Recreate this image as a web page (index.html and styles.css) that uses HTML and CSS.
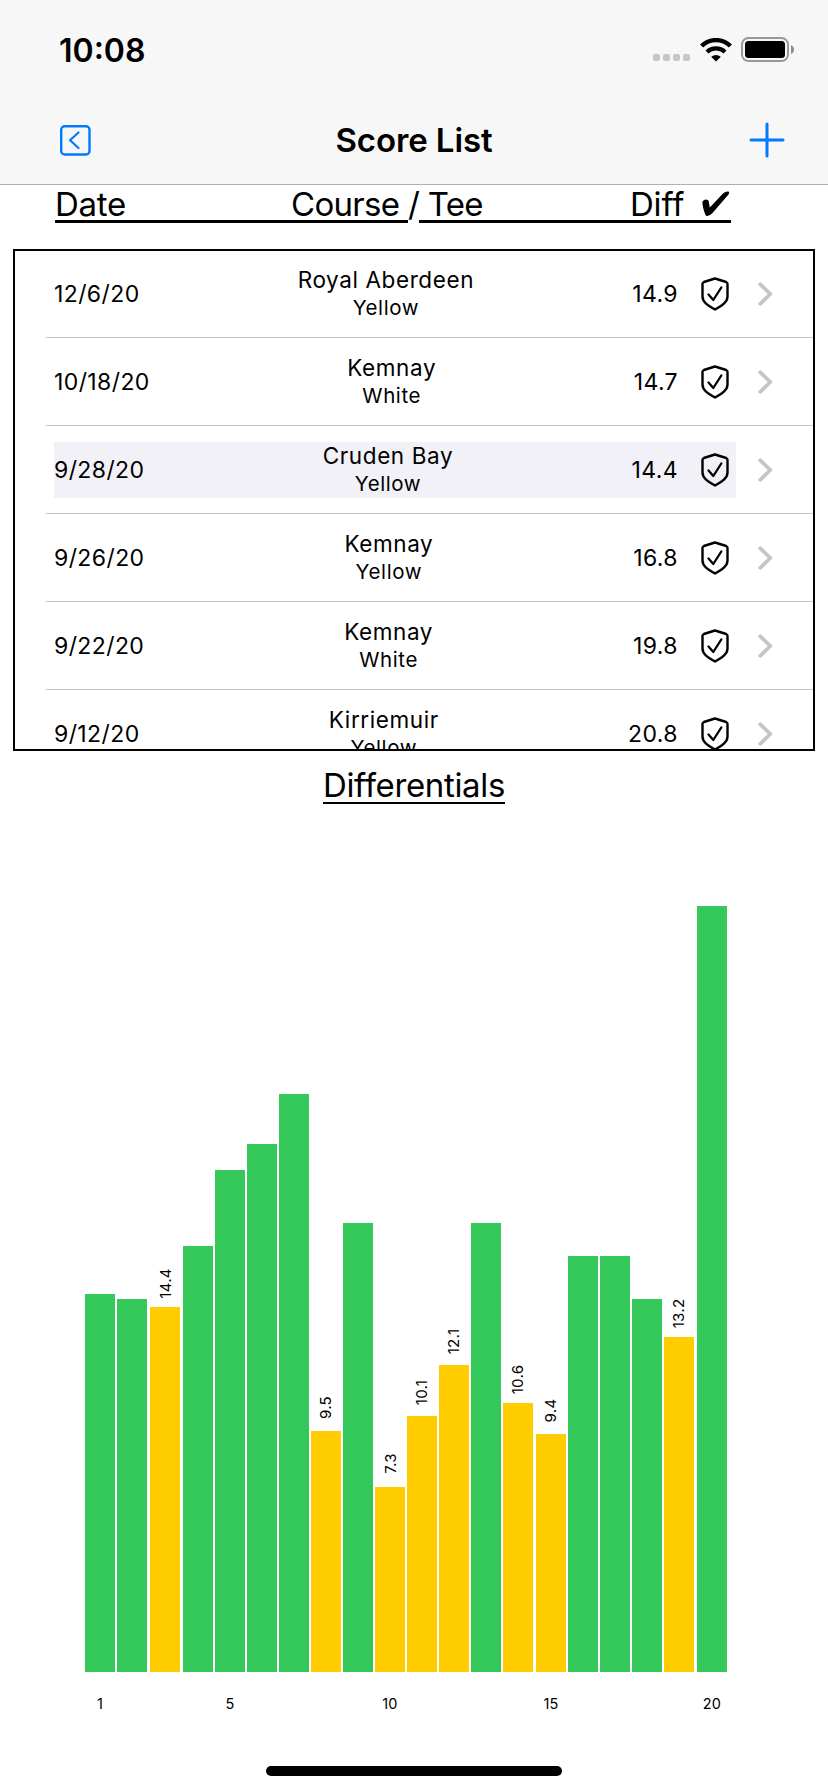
FILE: index.html
```html
<!DOCTYPE html>
<html lang="en">
<head>
    <meta charset="UTF-8">
    <meta name="viewport" content="width=device-width, initial-scale=1.0">
    <title>Score List</title>
    <link rel="stylesheet" href="styles.css">
</head>
<body>
    <svg class="defs" width="0" height="0">
        <symbol id="shield" viewBox="0 0 28 34">
            <path d="M14 1.5 L25.2 5 Q26.5 5.5 26.5 7 V19.5 C26.5 26 19 29.5 14 32.5 C9 29.5 1.5 26 1.5 19.5 V7 Q1.5 5.5 2.8 5 Z" fill="none" stroke="#000" stroke-width="2.4" stroke-linejoin="round"/>
            <path d="M7.5 17.5 L12.3 23 L20.3 10.5" fill="none" stroke="#000" stroke-width="2.3" stroke-linecap="round" stroke-linejoin="round"/>
        </symbol>
        <symbol id="chevron" viewBox="0 0 15 24">
            <path d="M2.2 2.2 L12.4 12 L2.2 21.8" fill="none" stroke="#c5c5c7" stroke-width="3.8" stroke-linecap="round" stroke-linejoin="round"/>
        </symbol>
    </svg>

    <header class="top">
        <div class="status">
            <div class="time">10:08</div>
            <div class="status-icons">
                <div class="dots"><i></i><i></i><i></i><i></i></div>
                <svg class="wifi" width="32" height="24" viewBox="0 0 32 24">
                    <path d="M1.6 8 A20.5 20.5 0 0 1 30.4 8" fill="none" stroke="#000" stroke-width="4.4"/>
                    <path d="M7 14 A13 13 0 0 1 25 14" fill="none" stroke="#000" stroke-width="4.2"/>
                    <path d="M16 23.6 L11.2 18.8 Q16 15 20.8 18.8 Z"/>
                </svg>
                <svg class="battery" width="53" height="25" viewBox="0 0 53 25">
                    <rect x="1" y="1" width="46" height="23" rx="6.5" fill="none" stroke="#999" stroke-width="2"/>
                    <rect x="4" y="4" width="40" height="17" rx="3.5"/>
                    <path d="M50 8 Q53 9.5 53 12.5 Q53 15.5 50 17 Z" fill="#8e8e8e"/>
                </svg>
            </div>
        </div>
        <div class="nav">
            <svg width="31" height="31" viewBox="0 0 31 31">
                <rect x="1.2" y="1.2" width="28.3" height="28.3" rx="3.5" fill="none" stroke="#007aff" stroke-width="2.4"/>
                <path d="M18.5 7.5 L10 15.2 L18.5 23" fill="none" stroke="#007aff" stroke-width="2.2" stroke-linecap="round" stroke-linejoin="round"/>
            </svg>
            <h1>Score List</h1>
            <svg width="36" height="36" viewBox="0 0 36 36">
                <path d="M18 2 V34 M2 18 H34" fill="none" stroke="#007aff" stroke-width="3" stroke-linecap="round"/>
            </svg>
        </div>
    </header>

    <div class="columns">
        <span class="col-date">Date</span>
        <span class="col-course">Course <span class="slash">/</span> Tee</span>
        <span class="col-diff">Diff</span>
        <svg class="tick" width="28" height="26" viewBox="0 0 28 26">
            <path d="M26.5 0.5 Q28 1.5 26.5 3.5 L10.5 22 Q7.5 25.5 4 24.8 C2.5 22 0 14 0.5 10.5 Q3 7 6.5 9.5 L7.8 16.5 L21 2.5 Q24 0 26.5 0.5 Z"/>
        </svg>
    </div>

    <div class="list">
        <div class="row">
            <div class="score">
                <span class="date">12/6/20</span>
                <div class="course"><div>Royal Aberdeen</div><small>Yellow</small></div>
                <span class="diff">14.9</span>
            </div>
            <svg class="chevron"><use href="#chevron"/></svg>
        </div>
        <div class="row">
            <div class="score">
                <span class="date">10/18/20</span>
                <div class="course"><div>Kemnay</div><small>White</small></div>
                <span class="diff">14.7</span>
            </div>
            <svg class="chevron"><use href="#chevron"/></svg>
        </div>
        <div class="row">
            <div class="score selected">
                <span class="date">9/28/20</span>
                <div class="course"><div>Cruden Bay</div><small>Yellow</small></div>
                <span class="diff">14.4</span>
            </div>
            <svg class="chevron"><use href="#chevron"/></svg>
        </div>
        <div class="row">
            <div class="score">
                <span class="date">9/26/20</span>
                <div class="course"><div>Kemnay</div><small>Yellow</small></div>
                <span class="diff">16.8</span>
            </div>
            <svg class="chevron"><use href="#chevron"/></svg>
        </div>
        <div class="row">
            <div class="score">
                <span class="date">9/22/20</span>
                <div class="course"><div>Kemnay</div><small>White</small></div>
                <span class="diff">19.8</span>
            </div>
            <svg class="chevron"><use href="#chevron"/></svg>
        </div>
        <div class="row">
            <div class="score">
                <span class="date">9/12/20</span>
                <div class="course"><div>Kirriemuir</div><small>Yellow</small></div>
                <span class="diff">20.8</span>
            </div>
            <svg class="chevron"><use href="#chevron"/></svg>
        </div>
    </div>

    <h2><span>Differentials</span></h2>
    <div class="chart" id="chart"></div>
    <div class="home"></div>

    <script>
        // every listed score is verified, so each one gets the shield
        document.querySelectorAll('.score').forEach(score => {
            score.insertAdjacentHTML('beforeend', '<svg class="shield"><use href="#shield"/></svg>');
        });

        // height in px, label (only the counting scores have one)
        const scores = [
            [378], [373], [365, "14.4"], [426], [502],
            [528], [578], [241, "9.5"], [449], [185, "7.3"],
            [256, "10.1"], [307, "12.1"], [449], [269, "10.6"], [238, "9.4"],
            [416], [416], [373], [335, "13.2"], [766]
        ];
        const chart = document.getElementById('chart');
        scores.forEach(([height, label], i) => {
            const n = i + 1;
            const col = document.createElement('div');
            col.classList.add('col');
            if (label) {
                const value = document.createElement('div');
                value.classList.add('value');
                value.innerHTML = '<span>' + label + '</span>';
                col.appendChild(value);
            }
            const bar = document.createElement('div');
            bar.className = label ? 'bar best' : 'bar';
            bar.style.height = height + 'px';
            col.appendChild(bar);
            const axis = document.createElement('div');
            axis.classList.add('axis');
            axis.innerText = n === 1 || n % 5 === 0 ? n : '';
            col.appendChild(axis);
            chart.appendChild(col);
        });
    </script>
</body>
</html>
```
FILE: styles.css
```css
* {
    box-sizing: border-box;
}
body {
    margin: 0;
    width: 828px;
    height: 1792px;
    overflow: hidden;
    background: #fff;
    color: #000;
    font-family: Inter, "Liberation Sans", sans-serif;
    display: flex;
    flex-direction: column;
}
svg {
    display: block;
    flex: none;
}
.defs {
    position: absolute;
}
.top {
    height: 185px;
    flex: none;
    background: #f7f7f7;
    border-bottom: 1px solid #b0b0b0;
}
.status {
    height: 96px;
    padding: 5px 34px 0 59px;
    display: flex;
    align-items: center;
    justify-content: space-between;
}
.time {
    font-size: 32px;
    font-weight: 600;
    line-height: 40px;
    letter-spacing: 0;
}
.status-icons {
    display: flex;
    align-items: center;
    margin-top: -2px;
}
.dots {
    display: flex;
    gap: 3px;
    margin: 16px 10px 0 0;
}
.dots i {
    width: 7px;
    height: 7px;
    border-radius: 2px;
    background: #c6c6c6;
}
.wifi {
    margin-right: 9px;
}
.nav {
    height: 88px;
    padding: 0 43px 0 60px;
    display: flex;
    align-items: center;
    justify-content: space-between;
}
h1 {
    margin: 0 0 0 -12px;
    font-size: 33px;
    font-weight: 600;
    line-height: 40px;
    letter-spacing: -0.1px;
}
.columns {
    height: 38px;
    flex: none;
    margin: 0 97px 0 55px;
    border-bottom: 3px solid #000;
    display: flex;
    font-size: 33px;
    line-height: 38px;
    letter-spacing: -0.7px;
}
.col-date {
    width: 236px;
    letter-spacing: -0.3px;
}
.col-course {
    width: 339px;
    white-space: nowrap;
}
.slash {
    position: relative;
    display: inline-block;
    height: 38px;
    background: #fff;
}
.col-diff {
    width: 72px;
    letter-spacing: -0.2px;
}
.tick {
    margin-top: 6px;
}
.list {
    width: 802px;
    height: 502px;
    flex: none;
    margin: 26px 0 0 13px;
    border: 2px solid #000;
    overflow: hidden;
}
.row {
    height: 88px;
    margin-left: 31px;
    padding: 0 40px 0 8px;
    border-bottom: 1px solid #c6c6c8;
    display: flex;
    align-items: center;
    justify-content: space-between;
}
.row:first-child {
    margin-top: -1px;
}
.score {
    width: 682px;
    height: 56px;
    padding-right: 7px;
    display: flex;
    align-items: center;
    justify-content: space-between;
}
.selected {
    background: #f2f1f7;
}
.date, .diff {
    padding-top: 1px;
    font-size: 23px;
    line-height: 30px;
    letter-spacing: 0.4px;
}
.course {
    margin: 0 auto;
    padding-top: 1px;
    text-align: center;
    font-size: 22.5px;
    line-height: 28px;
    letter-spacing: 0.6px;
}
.course small {
    display: block;
    font-size: 20.5px;
}
.shield {
    width: 28px;
    height: 34px;
    margin-left: 23px;
}
.chevron {
    width: 15px;
    height: 24px;
}
h2 {
    height: 36px;
    margin: 17px 0 0;
    flex: none;
    text-align: center;
    font-size: 33px;
    font-weight: 400;
    line-height: 34px;
    letter-spacing: -0.35px;
}
h2 span {
    display: inline-block;
    border-bottom: 2px solid #000;
}
.chart {
    height: 870px;
    flex: none;
    margin: auto 0 46px 85px;
    display: flex;
    align-items: flex-end;
    gap: 2px;
}
.col {
    width: 30px;
}
.col:nth-child(3), .col:nth-child(4), .col:nth-child(15), .col:nth-child(20) {
    margin-left: 1px;
}
.bar {
    background: #34c759;
}
.best {
    background: #ffcc00;
}
.value {
    height: 48px;
    display: flex;
    align-items: center;
    justify-content: center;
    font-size: 15px;
    letter-spacing: 0.3px;
}
.value span {
    transform: rotate(-90deg);
}
.axis {
    height: 48px;
    padding-top: 22px;
    text-align: center;
    font-size: 14.5px;
    line-height: 20px;
    letter-spacing: 0.2px;
}
.home {
    width: 296px;
    height: 10px;
    flex: none;
    margin: 0 auto 16px;
    border-radius: 5px;
    background: #000;
}
```
